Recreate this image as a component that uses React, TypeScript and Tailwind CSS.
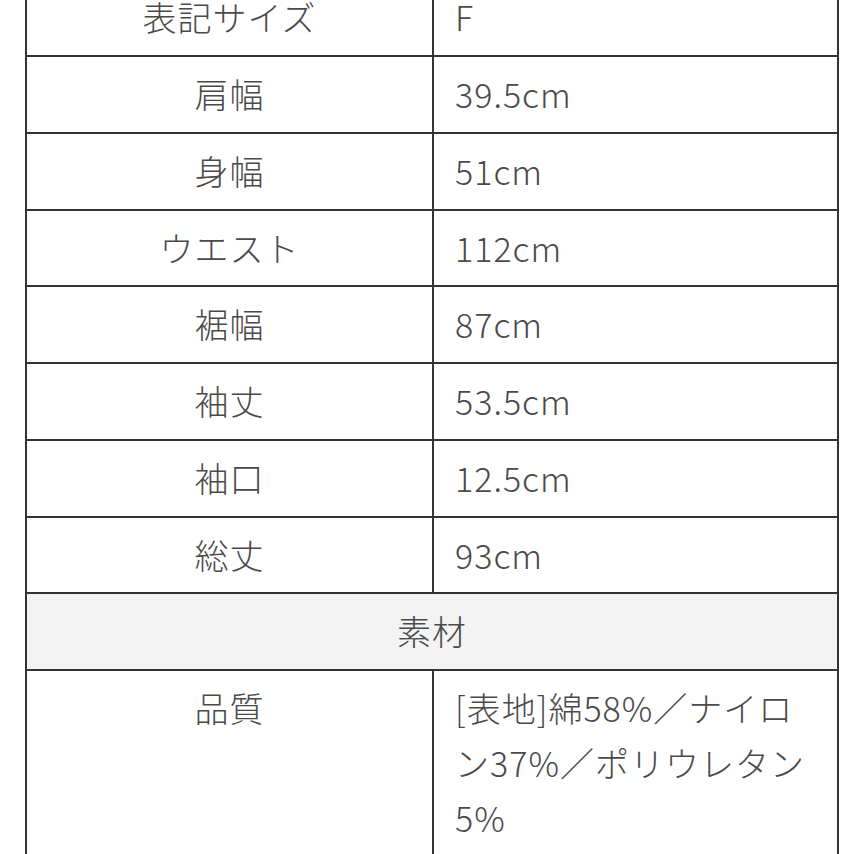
const rows: [string, string][] = [
  ["表記サイズ", "F"],
  ["肩幅", "39.5cm"],
  ["身幅", "51cm"],
  ["ウエスト", "112cm"],
  ["裾幅", "87cm"],
  ["袖丈", "53.5cm"],
  ["袖口", "12.5cm"],
  ["総丈", "93cm"],
]

function Row({ label, children }: { label: string; children: React.ReactNode }) {
  return (
    <div className="flex border-t-2 border-[#333]">
      <div className="w-[405px] shrink-0 py-[10px] text-center">{label}</div>
      <div className="flex-1 border-l-2 border-[#333] py-[10px] pl-[21px] pr-[12px]">{children}</div>
    </div>
  )
}

export default function App() {
  return (
    <div
      className="h-[854px] overflow-hidden bg-white text-[34px] font-extralight leading-[54.75px] tracking-[1px] text-[#4a4a4a]"
      style={{ fontFamily: '"Noto Sans CJK JP", "Noto Sans", sans-serif' }}
    >
      <div className="-mt-[21.75px] ml-[25px] w-[814px] border-x-2 border-[#333]">
        {rows.map(([label, value]) => (
          <Row key={label} label={label}>
            {value}
          </Row>
        ))}
        <div className="border-t-2 border-[#333] bg-[#f3f3f3] py-[10px] text-center">素材</div>
        <Row label="品質">
          [表地]綿58%／ナイロ
          <br />
          ン37%／ポリウレタン
          <br />
          5%
        </Row>
      </div>
    </div>
  )
}
